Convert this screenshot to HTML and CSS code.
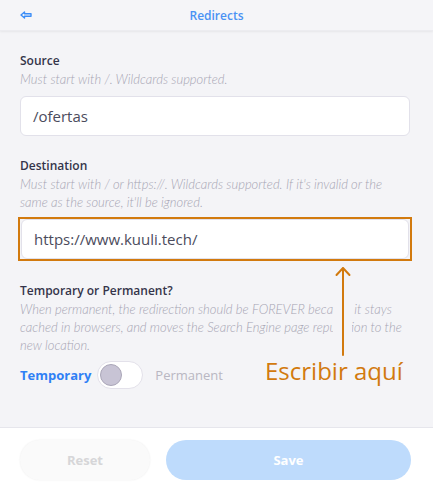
FILE: index.html
```html
<!DOCTYPE html>
<html>
<head>
<meta charset="utf-8">
<link rel="stylesheet" href="styles.css">
</head>
<body>
<div class="page">
  <header class="topbar">
    <svg class="back" width="12" height="8" viewBox="0 0 12 8"><path d="M4.5 1 L1 4 L4.5 7 L4.5 5.2 L11 5.2 L11 2.8 L4.5 2.8 Z" fill="none" stroke="#3d8ef7" stroke-width="1.4" stroke-linejoin="round"/></svg>
    <div class="title">Redirects</div>
  </header>
  <main class="content">
    <div class="field">
      <div class="label">Source</div>
      <div class="help">Must start with /. Wildcards supported.</div>
      <div class="input">/ofertas</div>
    </div>
    <div class="field">
      <div class="label">Destination</div>
      <div class="help">Must start with / or https://. Wildcards supported. If it's invalid or the same as the source, it'll be ignored.</div>
      <div class="highlight"><div class="input flush">https://www.kuuli.tech/</div></div>
    </div>
    <div class="field">
      <div class="label">Temporary or Permanent?</div>
      <div class="help">When permanent, the redirection should be FOREVER because it stays cached in browsers, and moves the Search Engine page reputation to the new location.</div>
      <div class="toggle-row">
        <span class="opt active">Temporary</span>
        <span class="switch"><span class="knob"></span></span>
        <span class="opt">Permanent</span>
      </div>
    </div>
    <svg class="arrow" width="22" height="92" viewBox="0 0 22 92"><rect x="1" y="32" width="19" height="54" fill="#f4f4f7"/><path d="M11 2 V89 M4.5 9 L11 2 L17.5 9" fill="none" stroke="#d27a0e" stroke-width="2" stroke-linecap="round" stroke-linejoin="round"/></svg>
    <div class="note">Escribir aquí</div>
  </main>
  <footer class="footer">
    <button class="btn reset">Reset</button>
    <button class="btn save">Save</button>
  </footer>
</div>
</body>
</html>
```
FILE: styles.css
```css
html, body { margin: 0; padding: 0; }
body {
  font-family: "Open Sans", "Noto Sans", sans-serif;
  background: #f4f4f7;
  width: 433px;
  height: 488px;
  overflow: hidden;
}
.page {
  display: flex;
  flex-direction: column;
  height: 488px;
}
.topbar {
  position: relative;
  height: 31px;
  display: flex;
  align-items: center;
  justify-content: center;
  background: #f5f5f8;
  box-shadow: 0 1px 2px rgba(0,0,0,0.06);
  border-bottom: 1px solid #ececf0;
  box-sizing: border-box;
}
.back {
  position: absolute;
  left: 20px;
  top: 11px;
}
.title {
  font-size: 12px;
  font-weight: 600;
  color: #4a92f4;
}
.content {
  position: relative;
  flex: 1;
  padding: 21px 23px 0 20px;
}
.field { margin-bottom: 21px; }
.label {
  font-size: 12px;
  font-weight: 600;
  line-height: 18px;
  color: #34344a;
}
.help {
  font-family: Lato, sans-serif;
  font-style: italic;
  font-weight: 300;
  font-size: 13px;
  line-height: 18px;
  color: #a6a4b3;
}
.input {
  margin-top: 8px;
  height: 40px;
  box-sizing: border-box;
  background: #fff;
  border: 1px solid #e2e1ea;
  border-radius: 6px;
  padding: 0 12px;
  display: flex;
  align-items: center;
  font-size: 15px;
  color: #4b4b5c;
}
.highlight {
  margin: 6px -2px 0 -2px;
  border: 2px solid #d27a0e;
  padding: 0 1px;
}
.input.flush {
  margin-top: 0;
}
.toggle-row {
  margin-top: 7px;
  display: flex;
  align-items: center;
  gap: 6px;
}
.opt {
  font-size: 13px;
  color: #b9b7c2;
}
.opt.active {
  font-weight: 700;
  color: #2f80f5;
}
.switch {
  width: 46px;
  height: 28px;
  box-sizing: border-box;
  border: 1px solid #e3e1ea;
  border-radius: 14px;
  background: #fff;
  display: flex;
  align-items: center;
  padding-left: 2px;
  margin-right: 6px;
}
.knob {
  width: 22px;
  height: 22px;
  box-sizing: border-box;
  border-radius: 50%;
  background: #c8c4d5;
  border: 1px solid #aaa6b8;
}
.arrow {
  position: absolute;
  left: 332px;
  top: 235px;
}
.note {
  position: absolute;
  left: 265px;
  top: 324px;
  font-size: 24px;
  color: #d27a0e;
  line-height: 32px;
}
.footer {
  height: 61px;
  box-sizing: border-box;
  border-top: 1px solid #e6e6ec;
  background: #fff;
  display: flex;
  gap: 16px;
  padding: 12px 22px 0 20px;
}
.btn {
  height: 40px;
  border-radius: 20px;
  font-family: "Open Sans", sans-serif;
  font-size: 13px;
  font-weight: 700;
  border: none;
}
.reset {
  width: 130px;
  background: #fafafa;
  color: #d6d6d8;
  box-shadow: 0 0 2px rgba(0,0,0,0.08);
}
.save {
  flex: 1;
  background: #bedbfc;
  color: #fff;
}
```
